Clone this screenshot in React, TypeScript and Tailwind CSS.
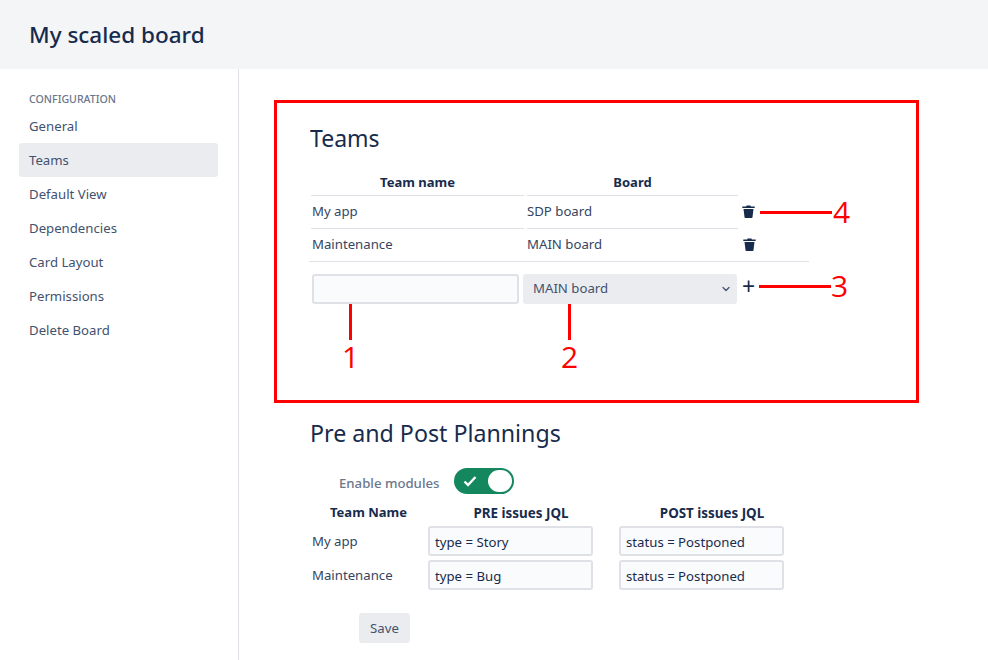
import React from 'react';
import { ChevronDown } from 'lucide-react';

const nav = ['General', 'Teams', 'Default View', 'Dependencies', 'Card Layout', 'Permissions', 'Delete Board'];

function Trash() {
  return (
    <svg width="13" height="13" viewBox="0 0 13 13" className="text-[#172b4d]">
      <path fill="currentColor" d="M4.6 0.4h3.8l0.5 1.1H12.7v1.5H0.3V1.5H4.1z" />
      <path fill="currentColor" d="M1.5 4h10L10.5 12.2q-0.1 0.8-0.9 0.8H3.4q-0.8 0-0.9-0.8z" />
    </svg>
  );
}

function Mark({ className, children }: { className: string; children: React.ReactNode }) {
  return (
    <div className={`absolute text-[#ff0000] text-[30px] leading-none font-['Open_Sans',sans-serif] ${className}`}>
      {children}
    </div>
  );
}

function JqlRow({ team, pre, post }: { team: string; pre: string; post: string }) {
  return (
    <div className="flex items-center h-[34px]">
      <div className="w-[118px] pl-[2px] pt-[2px]">{team}</div>
      <input readOnly value={pre} className="w-[165px] h-[30px] px-[5px] pt-[2px] rounded-[3px] border-2 border-[#dfe1e6] bg-[#fafbfc] text-[#172b4d] outline-none" />
      <input readOnly value={post} className="ml-[26px] w-[165px] h-[30px] px-[5px] pt-[2px] rounded-[3px] border-2 border-[#dfe1e6] bg-[#fafbfc] text-[#172b4d] outline-none" />
    </div>
  );
}

export default function App() {
  return (
    <div className="relative w-[988px] h-[660px] overflow-hidden bg-white text-[#344563] text-[13.2px] font-['Noto_Sans',sans-serif]">
      <header className="h-[69px] bg-[#f4f5f7] pl-[29px] flex items-center">
        <h1 className="text-[22.5px] font-medium text-[#172b4d]">My scaled board</h1>
      </header>

      <div className="flex h-[591px]">
        {/* Sidebar */}
        <aside className="w-[239px] shrink-0 border-r border-[#dfe1e6] pt-[23px] pl-[19px] pr-[20px]">
          <div className="pl-[10px] text-[10.6px] leading-[15px] font-medium text-[#6b778c] uppercase">Configuration</div>
          <nav className="mt-[2px]">
            {nav.map((item) => (
              <div
                key={item}
                className={`h-[34px] pl-[10px] pt-[1px] flex items-center rounded-[3px] text-[#42526e] ${item === 'Teams' ? 'bg-[#ebecf0]' : ''}`}
              >
                {item}
              </div>
            ))}
          </nav>
        </aside>

        {/* Main */}
        <main className="pl-[71px] pt-[52px]">
          <h2 className="text-[23px] leading-[34px] text-[#172b4d]">Teams</h2>

          <div className="mt-[18px] w-[500px] -ml-[1px]">
            <div className="flex gap-[3px] ml-[2px] h-[23px] font-bold text-[13px] text-[#172b4d]">
              <div className="w-[213px] text-center border-b border-[#dfe1e6] leading-[18px]">Team name</div>
              <div className="w-[211px] text-center border-b border-[#dfe1e6] leading-[18px]">Board</div>
            </div>
            <div className="flex gap-[3px] ml-[2px] h-[33px]">
              <div className="w-[213px] flex items-center pl-[1px] pb-[1px] border-b border-[#dfe1e6]">My app</div>
              <div className="w-[211px] flex items-center pb-[1px] border-b border-[#dfe1e6]">SDP board</div>
              <div className="pl-[1px] pb-[2px] flex items-center"><Trash /></div>
            </div>
            <div className="flex border-b border-[#dfe1e6] h-[33px]">
              <div className="ml-[3px] w-[215px] flex items-center pb-[1px]">Maintenance</div>
              <div className="w-[216px] flex items-center pb-[1px]">MAIN board</div>
              <div className="pb-[2px] flex items-center"><Trash /></div>
            </div>
            <div className="flex items-start mt-[12px] ml-[3px]">
              <input readOnly className="w-[207px] h-[30px] rounded-[3px] border-2 border-[#dfe1e6] bg-[#fafbfc] outline-none" />
              <div className="ml-[4px] w-[214px] h-[30px] rounded-[3px] bg-[#ebecf0] flex items-center justify-between pl-[10px] pr-[5px] pb-[1px] text-[#42526e]">
                MAIN board
                <ChevronDown size={12} strokeWidth={2.5} />
              </div>
              <div className="ml-[5px] text-[#172b4d] text-[23px] leading-[24px] w-[13px] flex justify-center">+</div>
            </div>
          </div>

          <h2 className="mt-[112px] text-[23.2px] leading-[34px] text-[#172b4d]">Pre and Post Plannings</h2>

          <div className="mt-[17px] flex items-center h-[28px]">
            <span className="ml-[29px] pt-[5px] w-[100px] whitespace-nowrap text-[#6b778c] font-medium">Enable modules</span>
            <div className="ml-[15px] w-[60px] h-[26px] rounded-full bg-[#14875f] flex items-center justify-between pl-[9px] pr-[2px]">
              <svg width="14" height="12" viewBox="0 0 14 12" fill="none" stroke="white" strokeWidth="2.4">
                <path d="M1.5 6.5l3.5 3.5 7.5-8" />
              </svg>
              <div className="w-[24px] h-[22px] rounded-full bg-white" />
            </div>
          </div>

          <div className="mt-[4px] flex h-[25px] pt-[3px] font-bold text-[13px] text-[#172b4d] items-center">
            <div className="w-[128px] pl-[20px]">Team Name</div>
            <div className="w-[166px] text-center text-[13.4px]">PRE issues JQL</div>
            <div className="ml-[25px] w-[166px] text-center text-[13.4px]">POST issues JQL</div>
          </div>
          <JqlRow team="My app" pre="type = Story" post="status = Postponed" />
          <JqlRow team="Maintenance" pre="type = Bug" post="status = Postponed" />

          <div className="mt-[21px] ml-[49px] w-[51px] h-[30px] pt-[1px] rounded-[3px] bg-[#ebecf0] flex items-center justify-center text-[#42526e]">Save</div>
        </main>
      </div>

      {/* Red annotations drawn over the screenshot */}
      <div className="absolute left-[274px] top-[100px] w-[645px] h-[303px] border-[3px] border-[#ff0000]" />
      <div className="absolute left-[349px] top-[304px] w-[3px] h-[36px] bg-[#ff0000]" />
      <div className="absolute left-[568px] top-[304px] w-[3px] h-[36px] bg-[#ff0000]" />
      <div className="absolute left-[759px] top-[285px] w-[72px] h-[3px] bg-[#ff0000]" />
      <div className="absolute left-[760px] top-[211px] w-[72px] h-[3px] bg-[#ff0000]" />
      <Mark className="left-[342px] top-[342px]">1</Mark>
      <Mark className="left-[561px] top-[342px]">2</Mark>
      <Mark className="left-[831px] top-[271px]">3</Mark>
      <Mark className="left-[833px] top-[197px]">4</Mark>
    </div>
  );
}
